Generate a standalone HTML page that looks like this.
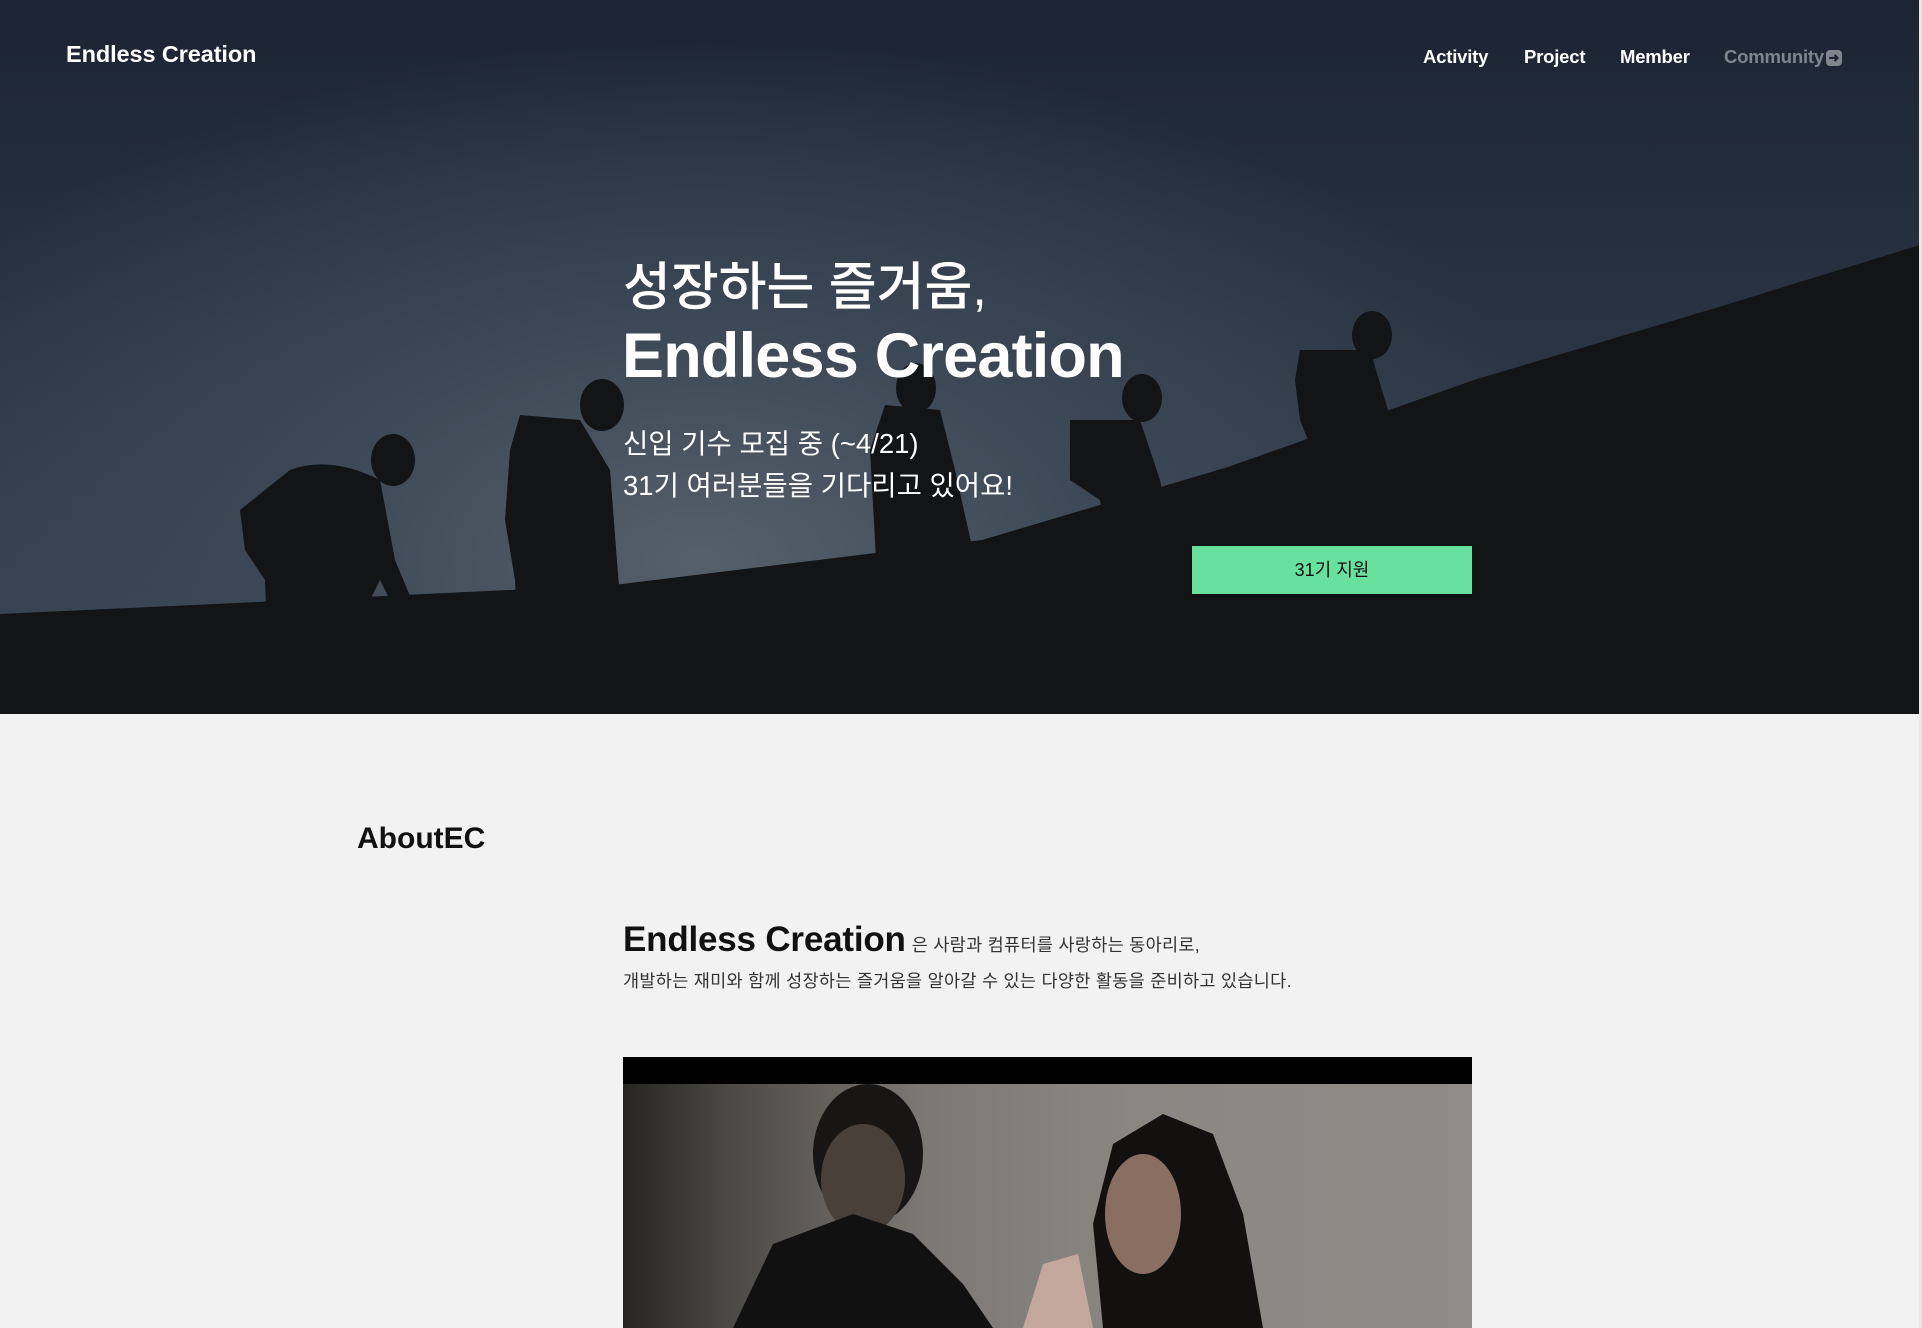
<!DOCTYPE html>
<html><head><meta charset="utf-8">
<style>
*{margin:0;padding:0;box-sizing:border-box}
html,body{width:1922px;height:1328px;overflow:hidden;background:#f2f2f2;font-family:"Liberation Sans","Noto Sans CJK KR",sans-serif}
.hero{position:absolute;left:0;top:0;width:1919px;height:714px;overflow:hidden;
background:radial-gradient(ellipse 900px 520px at 700px 560px,#56606a 0%,#3d4856 45%,rgba(30,38,52,0) 100%),linear-gradient(180deg,#1c2433 0%,#27313f 40%,#3a4553 100%)}
.hero svg{position:absolute;left:0;top:0}
.scroll{position:absolute;left:1919px;top:0;width:3px;height:1328px;background:#e8e8e8}
.logo{position:absolute;left:66px;top:41px;color:#fff;font-weight:bold;font-size:23.5px;letter-spacing:-0.1px}
.nav a{position:absolute;top:46px;color:#fff;font-size:18.5px;text-decoration:none;font-weight:bold;letter-spacing:-0.2px}
.h1{position:absolute;left:623px;top:245px;color:#fff;font-size:52px;font-weight:500}
.h2{position:absolute;left:622px;top:320px;color:#fff;font-size:63px;font-weight:bold;letter-spacing:-0.8px}
.sub{position:absolute;left:623px;color:#fff;font-size:27.5px}
.btn{position:absolute;left:1192px;top:546px;width:280px;height:48px;background:#68e09e;color:#111;font-size:18px;text-align:center;line-height:48px;box-shadow:0 2px 2px rgba(0,0,0,.4)}
.about{position:absolute;left:357px;top:822px;font-size:30px;font-weight:bold;color:#111;letter-spacing:0}
.ec{position:absolute;left:623px;top:920px;font-size:35px;font-weight:bold;color:#111;letter-spacing:-0.2px}
.ec span{font-size:17.5px;font-weight:normal;color:#333;letter-spacing:0.3px;margin-left:6px}
.line2{position:absolute;left:623px;top:968px;font-size:17.5px;color:#333;letter-spacing:0.3px}
.video{position:absolute;left:623px;top:1057px;width:849px;height:271px;background:#000;overflow:hidden}
.video .img{position:absolute;left:0;top:27px;width:849px;height:244px;background:linear-gradient(90deg,#262523 0%,#4a4845 12%,#7b7873 35%,#8a8782 60%,#8f8b86 100%)}
</style></head><body>
<div class="hero">
<svg width="1919" height="714" viewBox="0 0 1919 714">
<polygon fill="#121415" points="0,614 300,600 614,585 982,540 1228,467 1474,380 1719,307 1920,245 1920,714 0,714"/>
<g fill="#121415">
<ellipse cx="393" cy="460" rx="22" ry="26"/>
<path d="M290 470 Q330 455 380 480 L395 560 L420 620 L410 640 L380 580 L360 620 L330 700 L270 700 L265 580 L245 550 L240 510 Z"/>
<ellipse cx="602" cy="405" rx="22" ry="26"/>
<path d="M520 415 L580 420 L610 470 L620 600 L600 700 L520 700 L515 580 L505 520 L510 450 Z"/>
<ellipse cx="916" cy="388" rx="20" ry="25"/>
<path d="M885 405 L940 410 L955 470 L975 560 L960 650 L880 650 L875 540 L870 450 Z"/>
<ellipse cx="1142" cy="398" rx="20" ry="24"/>
<path d="M1070 420 L1140 420 L1160 480 L1175 560 L1110 560 L1100 500 L1070 480 Z"/>
<ellipse cx="1372" cy="335" rx="20" ry="24"/>
<path d="M1300 350 L1370 350 L1385 400 L1400 450 L1390 470 L1380 430 L1390 500 L1340 520 L1320 470 L1300 420 L1295 380 Z"/>
</g>
</svg>
<div class="logo">Endless Creation</div>
<div class="nav">
<a style="left:1423px">Activity</a>
<a style="left:1524px">Project</a>
<a style="left:1620px">Member</a>
<a style="left:1724px;color:#7f858c">Community <span style="display:inline-block;width:16px;height:16px;background:#7f858c;border-radius:4px;color:#1c2433;font-size:13px;line-height:16px;text-align:center;vertical-align:1px;margin-left:-3px">➜</span></a>
</div>
<div class="h1">성장하는 즐거움,</div>
<div class="h2">Endless Creation</div>
<div class="sub" style="top:421px">신입 기수 모집 중 (~4/21)</div>
<div class="sub" style="top:463px">31기 여러분들을 기다리고 있어요!</div>
<div class="btn">31기 지원</div>
</div>
<div class="scroll"></div>
<div class="about">AboutEC</div>
<div class="ec">Endless Creation<span>은 사람과 컴퓨터를 사랑하는 동아리로,</span></div>
<div class="line2">개발하는 재미와 함께 성장하는 즐거움을 알아갈 수 있는 다양한 활동을 준비하고 있습니다.</div>
<div class="video"><div class="img">
<svg width="849" height="244" style="position:absolute;left:0;top:0">
<ellipse cx="245" cy="70" rx="55" ry="70" fill="#171615"/>
<ellipse cx="240" cy="95" rx="42" ry="55" fill="#4a403a"/>
<path d="M110 244 L150 160 L230 130 L290 150 L340 200 L370 244 Z" fill="#111"/>
<path d="M480 244 L470 140 L490 60 L540 30 L590 50 L620 130 L640 244 Z" fill="#121110"/>
<ellipse cx="520" cy="130" rx="38" ry="60" fill="#8a6e62"/>
<path d="M400 244 L420 180 L455 170 L470 244 Z" fill="#c4a89e"/>
</svg>
</div></div>
</body></html>
